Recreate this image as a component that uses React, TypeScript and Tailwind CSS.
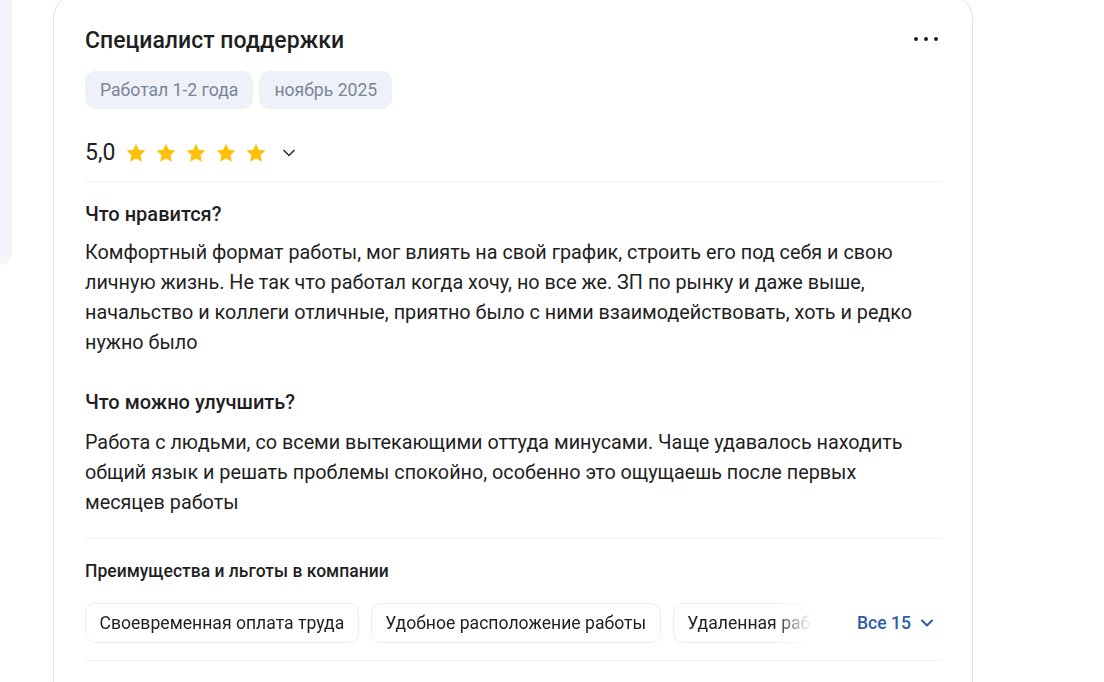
import { ChevronDown } from "lucide-react";

const font = { fontFamily: "Roboto, 'Noto Sans', sans-serif" };

function Star() {
  return (
    <svg viewBox="0 0 24 24" className="w-[22px] h-[22px]" fill="#ffc107">
      <path d="M12 1.8l3.1 6.6 7.2.9-5.3 5 1.4 7.2L12 18l-6.4 3.5L7 14.3l-5.3-5 7.2-.9z" />
    </svg>
  );
}

const benefits = ["Своевременная оплата труда", "Удобное расположение работы", "Удаленная работа"];

export default function App() {
  return (
    <div className="flex items-start gap-[41px] bg-white min-h-screen overflow-hidden text-[#1f1f1f]" style={font}>
      <div className="w-3 h-[265px] bg-[#f4f5fb] rounded-br-2xl shrink-0" />

      <div className="w-[920px] shrink-0 -mt-[6px] border border-[#dde2ec] rounded-3xl bg-white pt-8 px-[31px] pb-28">
        {/* header */}
        <div className="flex items-center justify-between">
          <h2 className="text-[23px] leading-7 font-medium">Специалист поддержки</h2>
          <div className="flex items-center gap-1.5 mr-[3px] -mt-1">
            <span className="w-1 h-1 rounded-full bg-[#1f1f1f]" />
            <span className="w-1 h-1 rounded-full bg-[#1f1f1f]" />
            <span className="w-1 h-1 rounded-full bg-[#1f1f1f]" />
          </div>
        </div>

        <div className="flex gap-1.5 mt-4">
          <span className="px-[15px] py-2 leading-[22px] text-[17.6px] bg-[#eef1f7] text-[#7a8599] rounded-[10px]">Работал 1-2 года</span>
          <span className="px-[15px] py-2 leading-[22px] text-[17.6px] bg-[#eef1f7] text-[#7a8599] rounded-[10px]">ноябрь 2025</span>
        </div>

        <div className="flex items-center h-8 mt-7">
          <span className="text-[23px] leading-8 mr-2.5">5,0</span>
          <div className="flex gap-2">
            <Star />
            <Star />
            <Star />
            <Star />
            <Star />
          </div>
          <ChevronDown className="w-5 h-5 ml-3 text-[#333]" strokeWidth={2} />
        </div>

        <div className="h-px bg-[#eef0f5] mt-3" />

        <h3 className="mt-5 text-[20px] leading-6 font-medium">Что нравится?</h3>
        <p className="mt-3 text-[19.8px] leading-[30px]">
          Комфортный формат работы, мог влиять на свой график, строить его под себя и свою личную жизнь. Не так что работал когда хочу, но все же. ЗП по рынку и даже выше, начальство и коллеги отличные, приятно было с ними взаимодействовать, хоть и редко нужно было
        </p>

        <h3 className="mt-8 text-[20px] leading-6 font-medium">Что можно улучшить?</h3>
        <p className="mt-[14px] text-[19.8px] leading-[30px]">
          Работа с людьми, со всеми вытекающими оттуда минусами. Чаще удавалось находить общий язык и решать проблемы спокойно, особенно это ощущаешь после первых месяцев работы
        </p>

        <div className="h-px bg-[#eef0f5] mt-5" />

        <h4 className="mt-[21px] text-[17.5px] leading-[22px] font-medium">Преимущества и льготы в компании</h4>

        <div className="flex items-center mt-[21px]">
          <div className="flex gap-3 w-[726px] overflow-hidden [mask-image:linear-gradient(to_right,black_95%,transparent_100%)]">
            {benefits.map((b) => (
              <span key={b} className="shrink-0 px-[13.5px] h-10 flex items-center text-[17.6px] border border-[#e9ecf3] rounded-[10px] whitespace-nowrap">
                {b}
              </span>
            ))}
          </div>
          <button className="ml-auto flex items-center gap-1.5 text-[17.6px] font-medium text-[#2f5ea8] mr-[4px]">
            Все 15
            <ChevronDown className="w-5 h-5" strokeWidth={2.5} />
          </button>
        </div>

        <div className="h-px bg-[#eef0f5] mt-[17px]" />
      </div>
    </div>
  );
}
